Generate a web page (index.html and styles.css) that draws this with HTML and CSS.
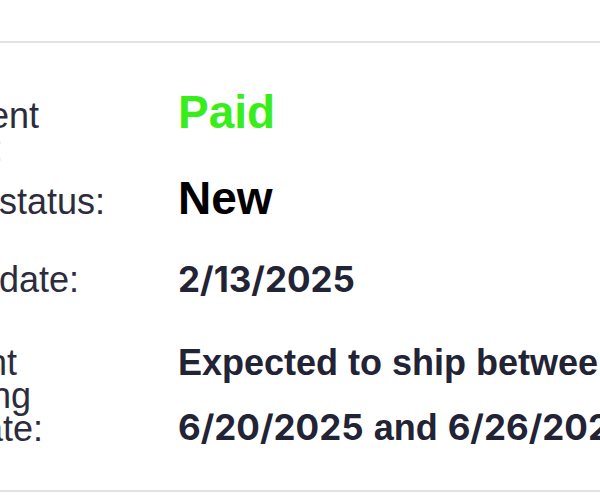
FILE: index.html
```html
<!DOCTYPE html>
<html lang="en">
<head>
<meta charset="utf-8">
<title>Order details</title>
<link rel="stylesheet" href="styles.css">
</head>
<body>
  <section class="order-card">
    <dl class="details">
      <dt class="label">Payment status:</dt>
      <dd class="value value-big value-paid">Paid</dd>

      <dt class="label">Order status:</dt>
      <dd class="value value-big value-status">New</dd>

      <dt class="label">Order date:</dt>
      <dd class="value"><span class="date">2/13/2025</span></dd>

      <dt class="label">Current shipping estimate:</dt>
      <dd class="value">Expected to ship between <span class="date">6/20/2025</span> and <span class="date">6/26/2025</span></dd>
    </dl>
  </section>
</body>
</html>
```

FILE: styles.css
```css
html, body {
  margin: 0;
  padding: 0;
  background: #ffffff;
  overflow: hidden;
}

body {
  font-family: "Liberation Sans", Arial, sans-serif;
  color: #232336;
}

.order-card {
  margin-top: 41px;
  border-top: 2px solid #e2e2e2;
  border-bottom: 2px solid #e2e2e2;
  padding: 41px 0 30px;
}

.details {
  margin: 0 0 0 -103px;
  display: grid;
  grid-template-columns: 248px 560px;
  grid-template-rows: 86px 77px 83px auto;
  column-gap: 33px;
  align-items: baseline;
}

.label {
  margin: 0;
  font-size: 36px;
  line-height: 33px;
  font-weight: 400;
  color: #2c2c3d;
}

.value {
  margin: 0;
  font-size: 36px;
  line-height: 65px;
  font-weight: 700;
  color: #232336;
}

.date {
  font-family: Inter, "Liberation Sans", sans-serif;
  font-size: 35px;
  font-weight: 700;
}

.value-big {
  font-size: 46px;
  line-height: 56px;
}

.value-paid {
  color: #38ee1a;
}

.value-status {
  color: #000000;
}
```
